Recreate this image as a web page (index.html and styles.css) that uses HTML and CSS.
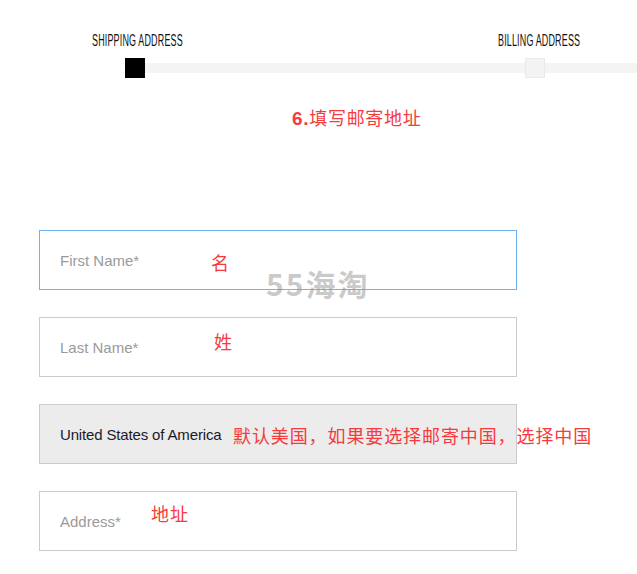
FILE: index.html
```html
<!DOCTYPE html>
<html lang="zh">
<head>
<meta charset="utf-8">
<title>Shipping Address</title>
<link rel="stylesheet" href="styles.css">
</head>
<body>
<div class="page">
  <div class="steps">
    <div class="labels">
      <span class="step-label step-label-1"><span class="cond">SHIPPING ADDRESS</span></span>
      <span class="step-label step-label-2"><span class="cond">BILLING ADDRESS</span></span>
    </div>
    <div class="track">
      <span class="sq sq-on"></span>
      <span class="bar bar-mid"></span>
      <span class="sq sq-off"></span>
      <span class="bar bar-end"></span>
    </div>
  </div>
  <h2 class="note-title"><b>6.</b>填写邮寄地址</h2>
  <form class="form">
    <div class="field field-focus">
      <span class="ph">First Name*</span>
      <span class="tip tip-first">名</span>
    </div>
    <div class="field">
      <span class="ph">Last Name*</span>
      <span class="tip tip-last">姓</span>
    </div>
    <div class="field field-select">
      <span class="val">United States of America</span>
      <span class="tip tip-country">默认美国，如果要选择邮寄中国，选择中国</span>
    </div>
    <div class="field">
      <span class="ph">Address*</span>
      <span class="tip tip-addr">地址</span>
    </div>
  </form>
  <div class="watermark">55海淘</div>
</div>
</body>
</html>
```

FILE: styles.css
```css
html, body {
  margin: 0;
  padding: 0;
  background: #fff;
}
.page {
  position: relative;
  width: 637px;
  height: 574px;
  overflow: hidden;
  font-family: "Liberation Sans", Arial, sans-serif;
}
.steps {
  padding-top: 31px;
}
.labels {
  display: flex;
  height: 19px;
}
.step-label {
  display: block;
  height: 19px;
  font-size: 16px;
  line-height: 19px;
  color: #111;
  white-space: nowrap;
}
.cond {
  display: inline-block;
  transform: scaleX(0.56);
  transform-origin: 0 0;
  letter-spacing: 0.3px;
}
.step-label-1 {
  margin-left: 92px;
  width: 406px;
}
.step-label-2 {
  width: 100px;
}
.track {
  display: flex;
  align-items: center;
  margin-top: 8px;
  padding-left: 125px;
}
.sq {
  display: block;
  width: 20px;
  height: 20px;
  box-sizing: border-box;
  flex: none;
}
.sq-on {
  background: #000;
}
.sq-off {
  background: #f3f3f3;
  border: 1px solid #e9e9e9;
}
.bar {
  display: block;
  height: 10px;
  background: #f4f4f4;
}
.bar-mid {
  width: 380px;
  flex: none;
}
.bar-end {
  flex: 1;
}
.note-title {
  margin: 27px 0 0 292px;
  font-size: 18px;
  line-height: 24px;
  font-weight: normal;
  color: #f43c3f;
  font-family: "Noto Sans CJK SC", sans-serif;
  letter-spacing: 0.7px;
}
.note-title b {
  font-family: "Liberation Sans", Arial, sans-serif;
  font-weight: bold;
  font-size: 19px;
}
.form {
  margin: 99px 0 0 39px;
  width: 478px;
}
.field {
  position: relative;
  display: flex;
  align-items: center;
  height: 60px;
  box-sizing: border-box;
  border: 1px solid #cbcbcb;
  padding-left: 20px;
  margin-bottom: 27px;
  background: #fff;
}
.field-focus {
  border-color: #6db5f2;
}
.field-select {
  background: #ececec;
}
.ph {
  font-size: 15px;
  color: #9a9a9a;
}
.val {
  font-size: 15px;
  color: #1a1a2a;
  letter-spacing: -0.15px;
}
.tip {
  position: absolute;
  font-family: "Noto Sans CJK SC", sans-serif;
  font-size: 18px;
  line-height: 22px;
  color: #f63a3d;
  white-space: nowrap;
  letter-spacing: 0.9px;
}
.tip-first {
  left: 171px;
  top: 20px;
}
.tip-last {
  left: 174px;
  top: 12px;
}
.tip-country {
  left: 193px;
  top: 19px;
}
.tip-addr {
  left: 111px;
  top: 10px;
}
.watermark {
  position: absolute;
  left: 266px;
  top: 263px;
  font-family: "Noto Sans CJK SC", sans-serif;
  font-weight: bold;
  font-size: 30px;
  line-height: 40px;
  letter-spacing: 2px;
  color: rgba(150, 150, 150, 0.5);
  white-space: nowrap;
}
```
